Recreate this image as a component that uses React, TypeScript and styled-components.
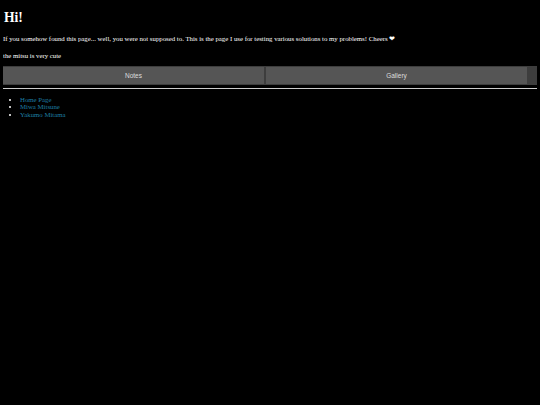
import styled, { createGlobalStyle } from "styled-components"

const Global = createGlobalStyle`
    body {
        margin: 3px;
        background: #000;
        color: #fff;
        font-family: "Liberation Serif", "Times New Roman", serif;
        font-size: 6.8px;
    }
`

const Title = styled.h1`
    font-size: 13.6px;
    margin: 7px 0 8px;
    padding-left: 1px;
`

const Text = styled.p`
    margin: 9px 0 6px;
    line-height: 1.15;
`

const Nav = styled.nav`
    display: flex;
    gap: 2px;
    padding: 1px 10px 1px 0;
    background: #3d3d3d;
`

const NavButton = styled.button`
    flex: 1;
    height: 17px;
    border: none;
    padding: 0;
    background: #555;
    color: #ddd;
    font-family: "Liberation Sans", Arial, sans-serif;
    font-size: 6.5px;
    cursor: pointer;
`

const Rule = styled.hr`
    margin: 3px 0 7px;
    border: none;
    border-top: 1px solid #ccc;
    height: 0;
`

const Links = styled.ul`
    margin: 0;
    padding-left: 17px;
    line-height: 1.1;
    a {
        color: #1d7ea3;
        text-decoration: none;
    }
`

export default function App() {
    return (
        <>
            <Global />
            <Title>Hi!</Title>
            <Text>
                If you somehow found this page... well, you were not supposed to. This is the page I use for testing various solutions to my problems! Cheers ❤
            </Text>
            <Text>the mitsu is very cute</Text>
            <Nav>
                <NavButton>Notes</NavButton>
                <NavButton>Gallery</NavButton>
            </Nav>
            <Rule />
            <Links>
                <li><a href="#">Home Page</a></li>
                <li><a href="#">Miwa Mitsune</a></li>
                <li><a href="#">Yakumo Mitama</a></li>
            </Links>
        </>
    )
}
